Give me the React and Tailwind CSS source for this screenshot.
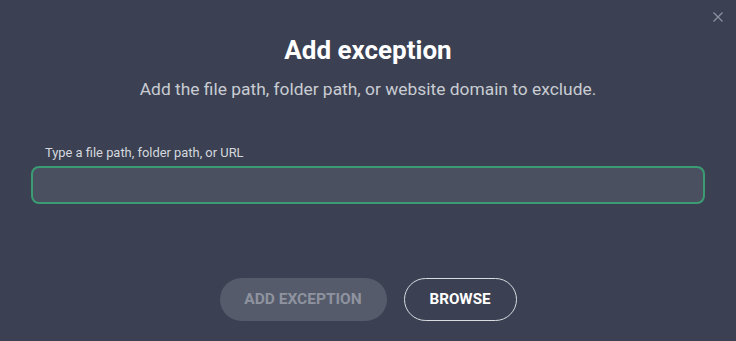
import React from "react";

export default function App() {
  return (
    <div className="w-[736px] h-[341px] bg-[#3b4152] flex flex-col relative" style={{ fontFamily: "Roboto, 'Liberation Sans', sans-serif" }}>
      <button className="absolute right-[12px] top-[11px] w-[12px] h-[12px] text-[#8c92a0]">
        <svg viewBox="0 0 12 12" width="12" height="12" fill="none" stroke="currentColor" strokeWidth="1.2">
          <path d="M1.5 1.5 L10.5 10.5 M10.5 1.5 L1.5 10.5" />
        </svg>
      </button>
      <h1 className="mt-[35px] text-center text-[26px] leading-[30px] font-bold text-white">Add exception</h1>
      <p className="mt-[14px] text-center text-[17.4px] leading-[20px] text-[#c9ccd3]">Add the file path, folder path, or website domain to exclude.</p>
      <label className="mt-[47px] ml-[45px] text-[12.9px] leading-[14px] text-[#d5d8de]">Type a file path, folder path, or URL</label>
      <div className="mt-[6px] mx-[31px] h-[38px] rounded-[8px] border-2 border-[#3b9b72] bg-[#4a505f]" />
      <div className="mt-[74px] flex justify-center gap-[17px]">
        <button className="w-[167px] h-[43px] rounded-full bg-[#555b6b] text-[#8e939f] text-[15.5px] font-bold">ADD EXCEPTION</button>
        <button className="w-[113px] h-[43px] rounded-full border-[1.5px] border-[#d8dbe0] text-white text-[15.2px] font-bold">BROWSE</button>
      </div>
    </div>
  );
}
